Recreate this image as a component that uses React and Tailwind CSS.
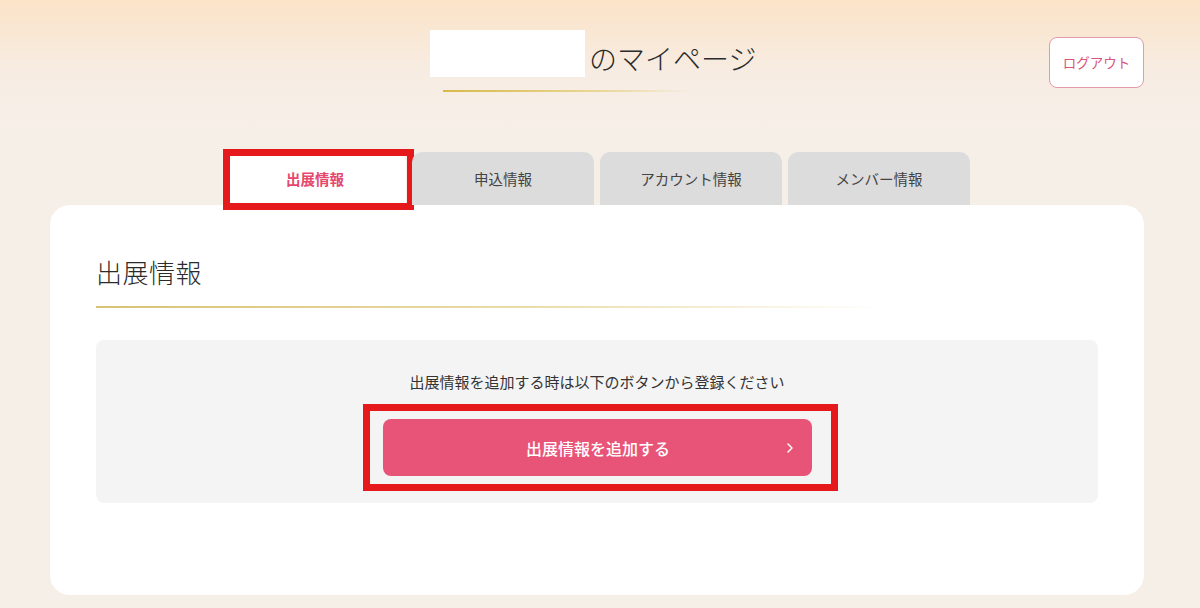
import { ChevronRight } from 'lucide-react';

const TABS = ['出展情報', '申込情報', 'アカウント情報', 'メンバー情報'];

const jp = { fontFamily: '"Noto Sans CJK JP", "Noto Sans", sans-serif' };

export default function App() {
  return (
    <div
      style={jp}
      className="min-h-[608px] w-[1200px] bg-[linear-gradient(to_bottom,#fbe3c7_0px,#f7ece2_70px,#f6efe8_130px)] text-[#333]"
    >
      <div className="ml-[50px] w-[1094px]">
        {/* ヘッダー */}
        <div className="flex items-start pt-[30px] h-[152px]">
          <div className="ml-[380px] flex flex-col">
            <div className="flex items-center h-[47px]">
              <div className="w-[155px] h-[47px] bg-white" />
              <h1 className="ml-[4px] pt-[8px] text-[28px] font-light leading-none text-[#2b2b2b]">
                のマイページ
              </h1>
            </div>
            <div className="mt-[13px] ml-[13px] w-[247px] h-[2px] bg-[linear-gradient(to_right,#d8b94a,#e8d591_60%,rgba(240,225,180,0))]" />
          </div>
          <button className="ml-auto mt-[7px] w-[95px] h-[51px] rounded-[8px] border border-[#e39aab] bg-white text-[13.5px] text-[#d9557a]">
            ログアウト
          </button>
        </div>

        {/* タブ */}
        <div className="flex justify-center gap-[6px] h-[53px]">
          {TABS.map((t, i) => (
            <div key={t} className="relative w-[182px]">
              {i === 0 ? (
                <>
                  <div className="h-full bg-white rounded-t-[10px] flex items-center justify-center text-[14.5px] font-bold text-[#e5486f]">
                    {t}
                  </div>
                  {/* 注記の赤枠 */}
                  <div className="absolute left-[-1px] right-[-8px] top-[-3px] bottom-[-5px] border-[7px] border-[#e5191c]" />
                </>
              ) : (
                <div className="h-full bg-[#dcdcdc] rounded-t-[10px] flex items-center justify-center text-[14.5px] text-[#444]">
                  {t}
                </div>
              )}
            </div>
          ))}
        </div>

        {/* パネル */}
        <div className="bg-white rounded-[20px] px-[46px] pt-[47px] pb-[92px]">
          <h2 className="text-[26px] font-light leading-[39px] text-[#2b2b2b] tracking-[0.02em]">出展情報</h2>
          <div className="mt-[15px] w-[790px] h-[2px] bg-[linear-gradient(to_right,#d8c275,#ebdca8_55%,rgba(245,235,200,0))]" />

          <div className="mt-[32px] bg-[#f4f4f4] rounded-[8px] pt-[31px] pb-[27px]">
            <p className="text-center text-[15px] leading-[21px] text-[#333]">
              出展情報を追加する時は以下のボタンから登録ください
            </p>
            <div className="relative mt-[27px] mx-auto w-[429px]">
              <button className="w-full h-[57px] rounded-[8px] bg-[#e85478] text-white text-[16px] font-medium flex items-center pl-[30px] pr-[14px]">
                <span className="flex-1 text-center pl-[2px]">出展情報を追加する</span>
                <ChevronRight size={16} strokeWidth={2.2} />
              </button>
              {/* 注記の赤枠 */}
              <div className="absolute left-[-20px] right-[-26px] top-[-15px] bottom-[-15px] border-[7px] border-[#e5191c] pointer-events-none" />
            </div>
          </div>
        </div>
      </div>
    </div>
  );
}
